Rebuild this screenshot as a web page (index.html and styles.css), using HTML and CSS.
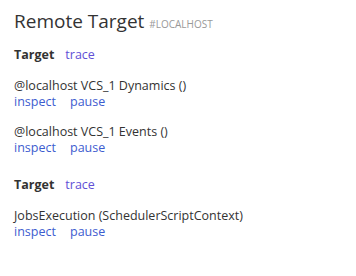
FILE: index.html
```html
<!DOCTYPE html>
<html>
<head>
<meta charset="utf-8">
<title>Remote Target</title>
<link rel="stylesheet" href="styles.css">
</head>
<body>
<div class="page">
    <h1 class="title">Remote Target <span class="host">#LOCALHOST</span></h1>

    <div class="target">
        <div class="target-head"><b>Target</b><a class="trace" href="#">trace</a></div>
        <div class="item">
            <div class="item-name">@localhost VCS_1 Dynamics ()</div>
            <div class="actions"><a href="#">inspect</a><a href="#">pause</a></div>
        </div>
        <div class="item">
            <div class="item-name">@localhost VCS_1 Events ()</div>
            <div class="actions"><a href="#">inspect</a><a href="#">pause</a></div>
        </div>
    </div>

    <div class="target">
        <div class="target-head"><b>Target</b><a class="trace" href="#">trace</a></div>
        <div class="item">
            <div class="item-name">JobsExecution (SchedulerScriptContext)</div>
            <div class="actions"><a href="#">inspect</a><a href="#">pause</a></div>
        </div>
    </div>
</div>
</body>
</html>
```

FILE: styles.css
```css
body {margin: 0; background: #fff; font-family: "Open Sans", "Noto Sans", sans-serif; font-size: 12.5px; color: #333;}
a {text-decoration: none; color: #3d5ccf;}
.page {padding: 8px 14px;}
.title {margin: 0; font-size: 19px; font-weight: 400; color: #333; line-height: 26px;}
.host {font-size: 10px; color: #999; margin-left: 0;}
.target {margin-top: 9px;}
.target + .target {margin-top: 20px;}
.target-head {line-height: 18px;}
.target-head b {font-weight: 700; margin-right: 11px;}
.trace {color: #614fd6;}
.item {margin-top: 14px; line-height: 16px;}
.actions a {margin-right: 15px;}
.actions a:first-child {display: inline-block; width: 41px;}
```
